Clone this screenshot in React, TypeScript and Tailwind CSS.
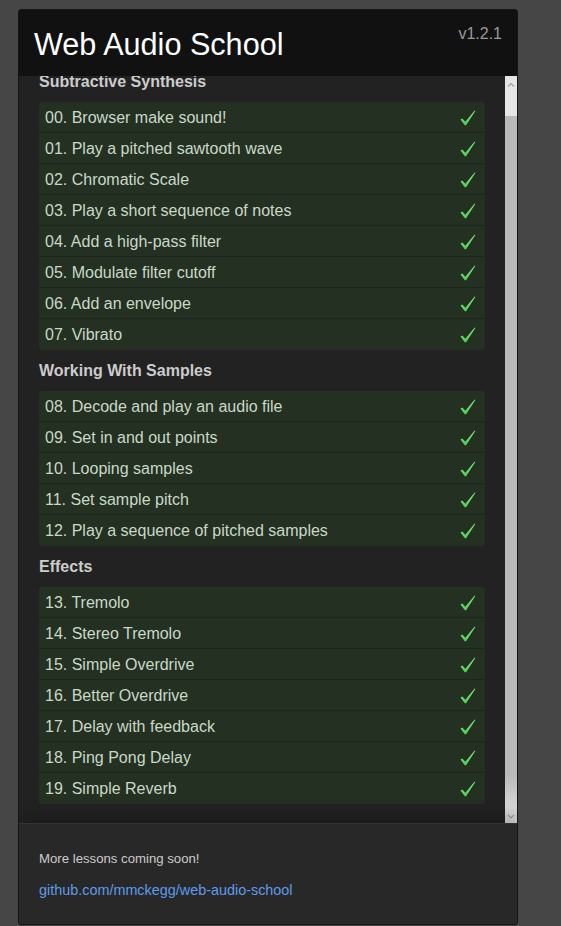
import React from 'react';

type Lesson = { id: string; title: string };
type Section = { name: string; lessons: Lesson[] };

const sections: Section[] = [
  {
    name: 'Subtractive Synthesis',
    lessons: [
      { id: '00', title: 'Browser make sound!' },
      { id: '01', title: 'Play a pitched sawtooth wave' },
      { id: '02', title: 'Chromatic Scale' },
      { id: '03', title: 'Play a short sequence of notes' },
      { id: '04', title: 'Add a high-pass filter' },
      { id: '05', title: 'Modulate filter cutoff' },
      { id: '06', title: 'Add an envelope' },
      { id: '07', title: 'Vibrato' },
    ],
  },
  {
    name: 'Working With Samples',
    lessons: [
      { id: '08', title: 'Decode and play an audio file' },
      { id: '09', title: 'Set in and out points' },
      { id: '10', title: 'Looping samples' },
      { id: '11', title: 'Set sample pitch' },
      { id: '12', title: 'Play a sequence of pitched samples' },
    ],
  },
  {
    name: 'Effects',
    lessons: [
      { id: '13', title: 'Tremolo' },
      { id: '14', title: 'Stereo Tremolo' },
      { id: '15', title: 'Simple Overdrive' },
      { id: '16', title: 'Better Overdrive' },
      { id: '17', title: 'Delay with feedback' },
      { id: '18', title: 'Ping Pong Delay' },
      { id: '19', title: 'Simple Reverb' },
    ],
  },
];

const Check: React.FC = () => (
  <svg width="16" height="16" viewBox="0 0 16 16" className="shrink-0">
    <defs>
      <linearGradient id="chk" x1="0" y1="0" x2="0" y2="1">
        <stop offset="0" stopColor="#7cf07c" />
        <stop offset="1" stopColor="#4fcf4f" />
      </linearGradient>
    </defs>
    <path d="M0.5 9.6 L2.3 8.4 L5.3 11.8 L14.7 0.4 L15.3 0.9 L6.1 15.2 L4.8 15.2 Z" fill="url(#chk)" />
  </svg>
);

const ScrollBar: React.FC = () => (
  <div className="w-[12px] shrink-0 flex flex-col bg-[#e6e6e6]">
    <div className="h-[16px] flex items-center justify-center">
      <svg width="8" height="5" viewBox="0 0 8 5">
        <path d="M1 4.5 L4 1.5 L7 4.5" stroke="#a0a0a0" strokeWidth="1.2" fill="none" />
      </svg>
    </div>
    <div className="h-[24px]" />
    <div className="flex-1 bg-gradient-to-b from-[#b9b9b9] via-[#b9b9b9] via-95% to-[#d8d8d8]" />
    <div className="h-[14px] bg-[#d6d6d6] flex items-center justify-center">
      <svg width="8" height="5" viewBox="0 0 8 5">
        <path d="M1 0.8 L4 3.8 L7 0.8" stroke="#9a9a9a" strokeWidth="1.2" fill="none" />
      </svg>
    </div>
  </div>
);

export default function App() {
  return (
    <div className="min-h-screen bg-[#464646] pt-[9px] pl-[18px] font-['Liberation_Sans',Arial,sans-serif]">
      <div className="w-[500px] h-[916px] flex flex-col border border-[#151515] rounded-[3px] overflow-hidden bg-[#222]">
        <header className="bg-[#111] h-[66px] shrink-0 flex items-start justify-between pl-[15px] pr-[15px] pt-[16px]">
          <h1 className="text-[30.6px] leading-[36px] text-white">Web Audio School</h1>
          <span className="text-[16px] leading-[20px] text-[#999] -mt-[2px]">v1.2.1</span>
        </header>

        <div className="flex-1 flex min-h-0">
          <div className="flex-1 overflow-hidden px-[20px]">
            <div className="-mt-[4px]">
              {sections.map((s, i) => (
                <div key={s.name} className={i > 0 ? 'mt-[11px]' : ''}>
                  <h2 className="text-[16px] leading-[20px] font-bold text-[#ccc] mb-[10px]">{s.name}</h2>
                  <ul className="rounded-[3px] overflow-hidden bg-[#233022]">
                    {s.lessons.map((l) => (
                      <li
                        key={l.id}
                        className="h-[31px] flex items-center justify-between pl-[6px] pr-[9px] pt-[1px] text-[16px] text-[#c9d9c6] border-b border-[#1d281c] last:border-b-0"
                      >
                        <span>
                          {l.id}. {l.title}
                        </span>
                        <Check />
                      </li>
                    ))}
                  </ul>
                </div>
              ))}
            </div>
          </div>
          <ScrollBar />
        </div>

        <footer className="relative shrink-0 h-[101px] bg-[#282828] border-t border-[#333] px-[20px] pt-[26px] text-[13.2px] leading-[18px] shadow-[0_-8px_14px_rgba(0,0,0,0.2)]">
          <p className="text-[#ccc] mb-[13px]">More lessons coming soon!</p>
          <a className="text-[14.4px] text-[#5d9cec]">github.com/mmckegg/web-audio-school</a>
        </footer>
      </div>
    </div>
  );
}
